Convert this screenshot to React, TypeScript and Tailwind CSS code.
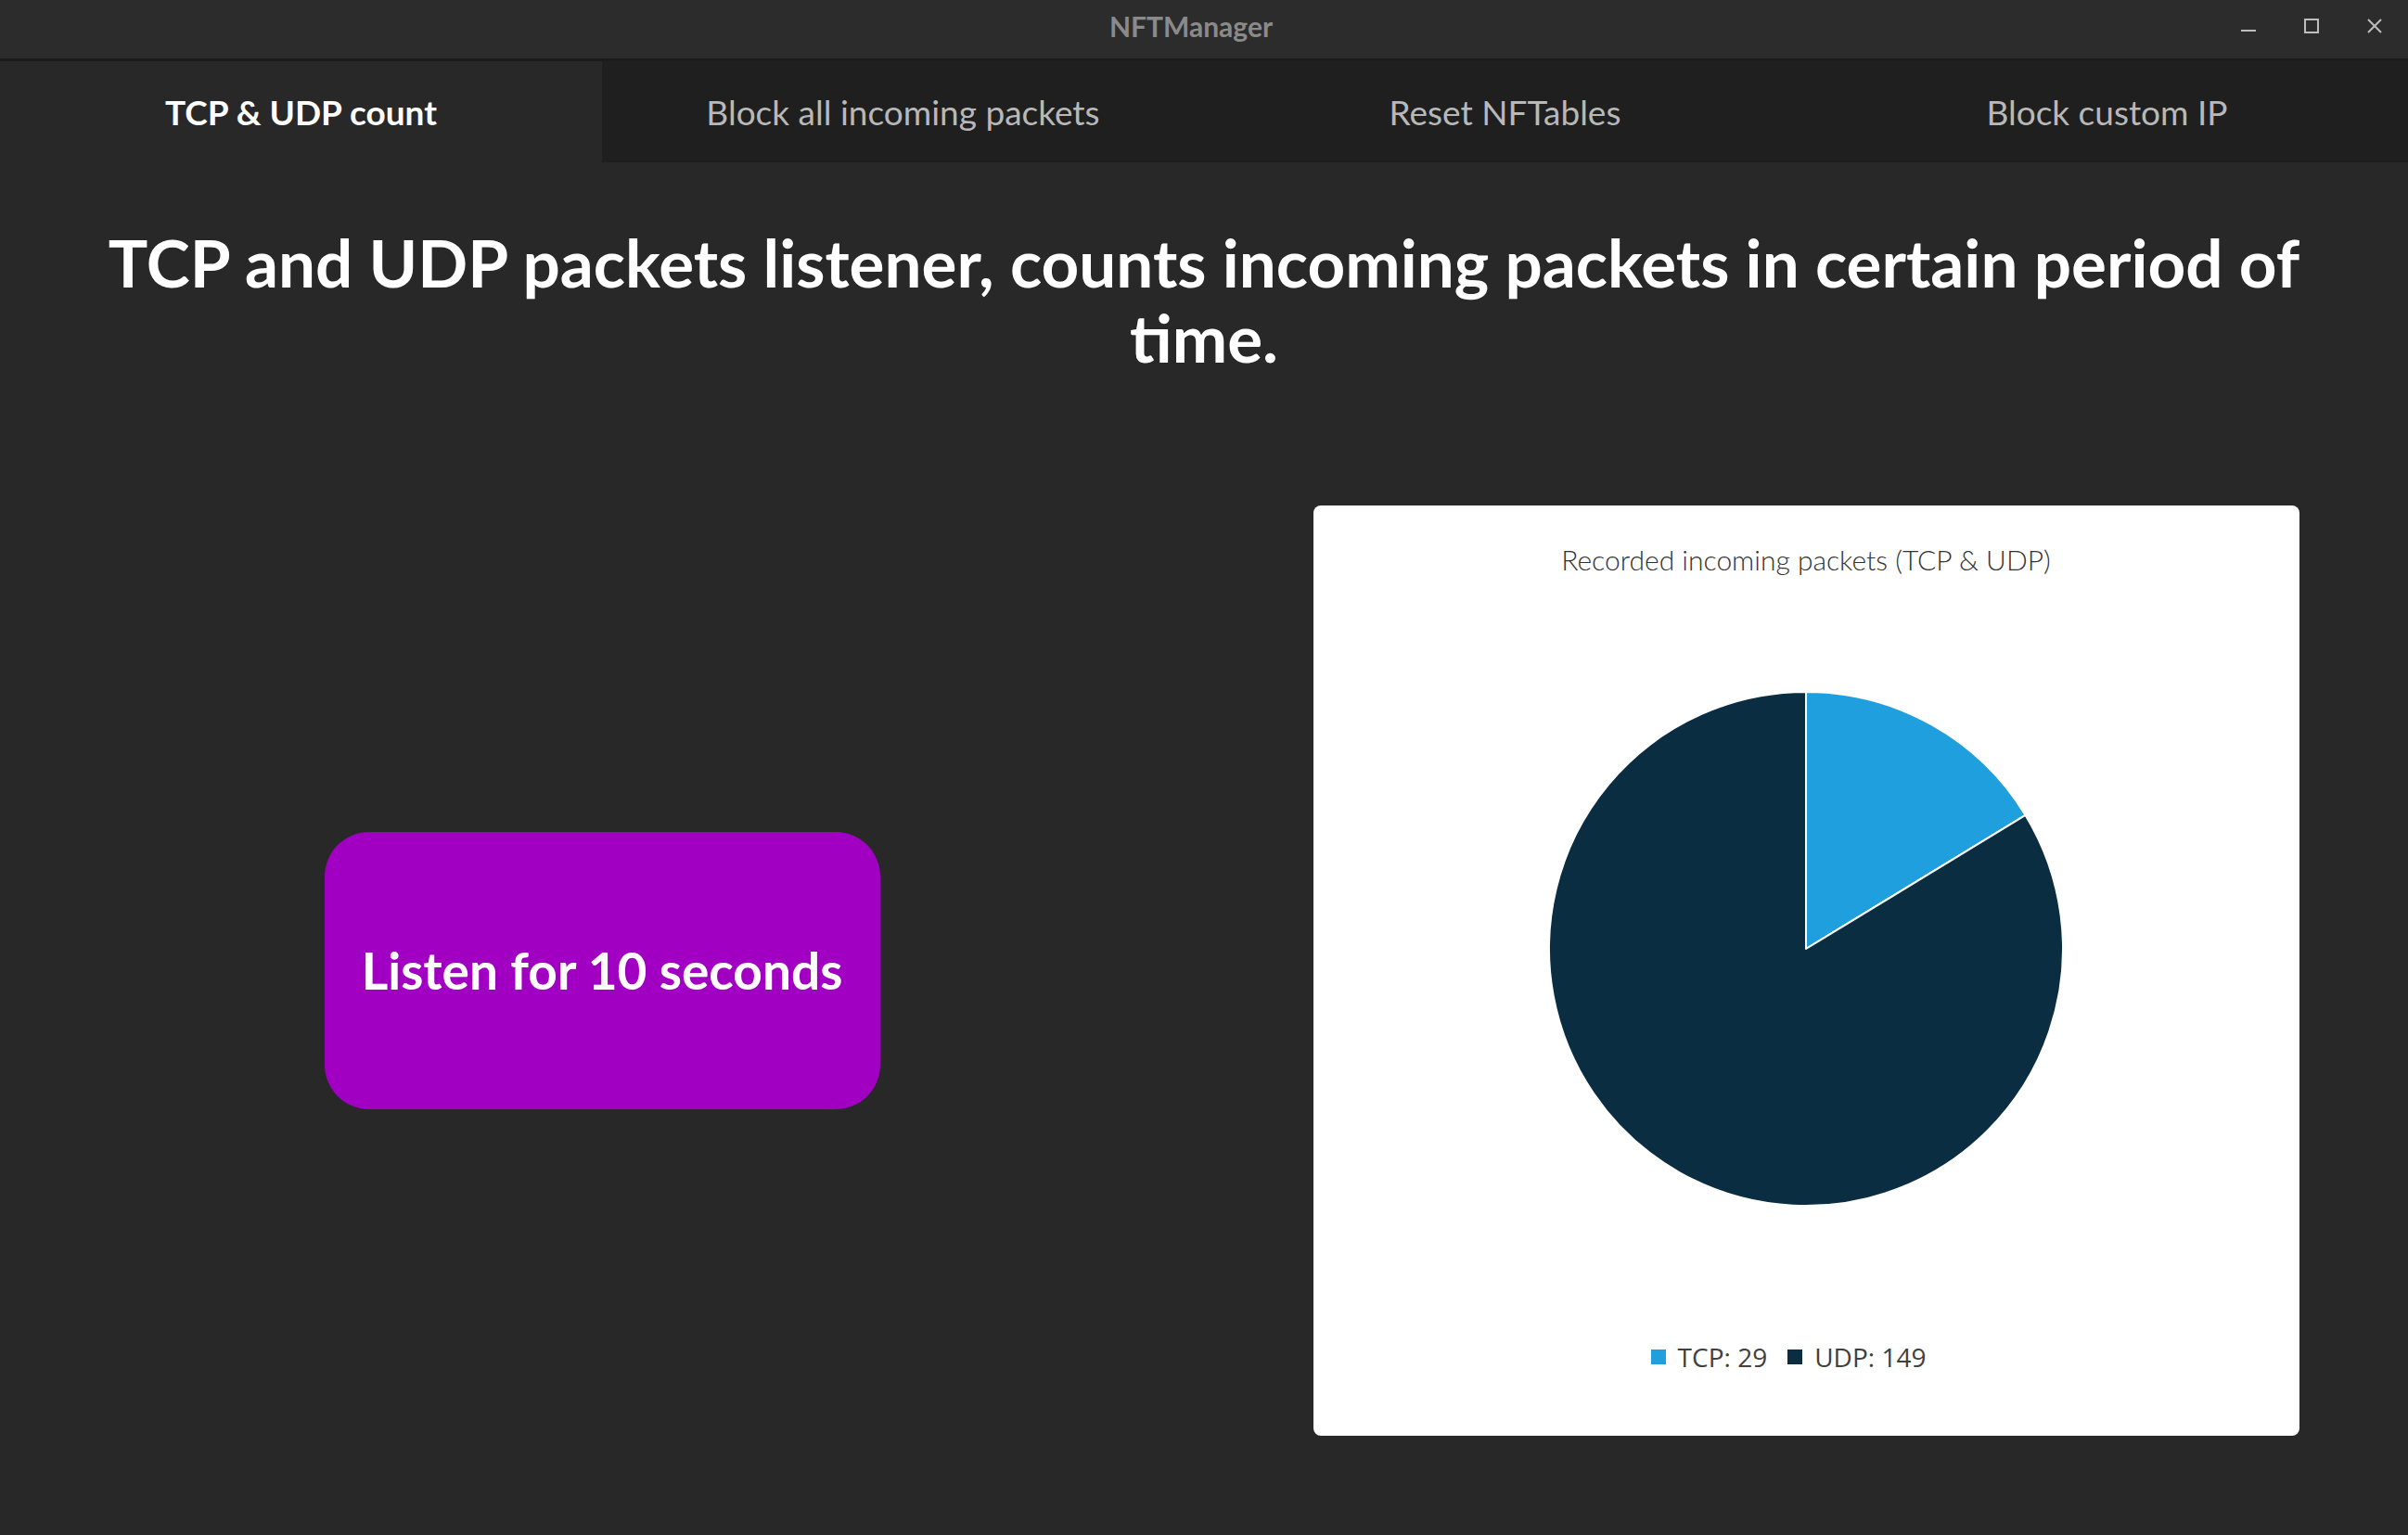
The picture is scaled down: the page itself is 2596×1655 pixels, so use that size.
import React from 'react';

const tabs = ['TCP & UDP count', 'Block all incoming packets', 'Reset NFTables', 'Block custom IP'];

const data = [
  { label: 'TCP', value: 29, color: '#209fdf' },
  { label: 'UDP', value: 149, color: '#0a2d42' },
];

const PieChart: React.FC = () => {
  const r = 277;
  const total = data.reduce((s, d) => s + d.value, 0);
  let start = 0;
  const slices = data.map((d) => {
    const a0 = (start / total) * Math.PI * 2;
    start += d.value;
    const a1 = (start / total) * Math.PI * 2;
    const x0 = r + r * Math.sin(a0);
    const y0 = r - r * Math.cos(a0);
    const x1 = r + r * Math.sin(a1);
    const y1 = r - r * Math.cos(a1);
    const large = a1 - a0 > Math.PI ? 1 : 0;
    return { ...d, path: `M ${r} ${r} L ${x0} ${y0} A ${r} ${r} 0 ${large} 1 ${x1} ${y1} Z` };
  });

  return (
    <svg width={554} height={554} viewBox="0 0 554 554" className="block overflow-visible">
      {slices.map((s) => (
        <path key={s.label} d={s.path} fill={s.color} stroke="#ffffff" strokeWidth={2} strokeLinejoin="round" />
      ))}
    </svg>
  );
};

export default function App() {
  return (
    <div className="w-[2596px] h-[1655px] flex flex-col bg-[#282828] font-['Lato',sans-serif] overflow-hidden">
      {/* Title bar */}
      <div className="h-[66px] flex items-center pb-[8px] bg-[#2c2c2c] border-b-[3px] border-[#1c1c1c]">
        <div className="flex-1" />
        <div className="text-[30px] font-bold text-[#8a8a8a] leading-none">NFTManager</div>
        <div className="flex-1 flex justify-end items-center gap-[52px] pr-[28px]">
          <svg width="16" height="16" viewBox="0 0 16 16">
            <line x1="0" y1="13" x2="16" y2="13" stroke="#bdbdbd" strokeWidth="2" />
          </svg>
          <svg width="16" height="16" viewBox="0 0 16 16">
            <rect x="1" y="1" width="14" height="14" fill="none" stroke="#bdbdbd" strokeWidth="2" />
          </svg>
          <svg width="16" height="16" viewBox="0 0 16 16">
            <path d="M1 1 L15 15 M15 1 L1 15" stroke="#bdbdbd" strokeWidth="2" />
          </svg>
        </div>
      </div>

      {/* Tabs */}
      <div className="grid grid-cols-4 h-[109px] bg-[#1f1f1f]">
        {tabs.map((t, i) => (
          <div
            key={t}
            className={
              i === 0
                ? 'flex items-center justify-center bg-[#282828] text-white font-bold text-[37px]'
                : 'flex items-center justify-center text-[#b8b8b8] text-[37px]'
            }
          >
            {t}
          </div>
        ))}
      </div>

      {/* Heading */}
      <div className="pt-[67px] pb-[33px] px-[70px]">
        <h1 className="text-center text-white font-bold text-[71px] leading-[81px]">
          TCP and UDP packets listener, counts incoming packets in certain period of time.
        </h1>
      </div>

      {/* Content */}
      <div className="flex-1 grid grid-cols-2 items-center">
        <div className="flex justify-center">
          <button className="w-[599px] h-[299px] rounded-[48px] bg-[#a100c2] text-white font-bold text-[55px]">
            Listen for 10 seconds
          </button>
        </div>
        <div className="flex justify-center">
          <div className="w-[1063px] h-[1003px] bg-white rounded-[8px] flex flex-col items-center">
            <div className="mt-[41px] h-[34px] leading-[34px] text-[30px] font-light text-[#333333]">
              Recorded incoming packets (TCP &amp; UDP)
            </div>
            <div className="mt-[126px]">
              <PieChart />
            </div>
            <div className="mt-[144px] mr-[38px] flex items-center gap-[22px] font-['Open_Sans',sans-serif] text-[28px] leading-[38px] text-[#404040]">
              {data.map((d) => (
                <div key={d.label} className="flex items-center gap-[13px]">
                  <span className="w-[16px] h-[16px]" style={{ backgroundColor: d.color }} />
                  <span>
                    {d.label}: {d.value}
                  </span>
                </div>
              ))}
            </div>
          </div>
        </div>
      </div>
    </div>
  );
}
